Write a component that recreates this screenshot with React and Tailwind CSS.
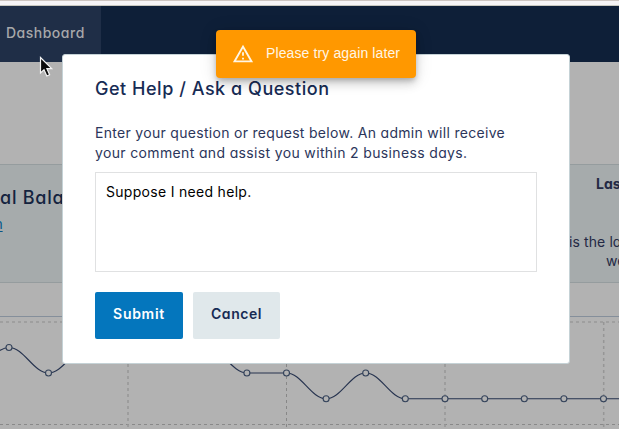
const points = [
  [-31, 373], [9, 347.5], [48.5, 373], [88, 347.5], [128, 347.5], [167, 347.5], [207, 347.5],
  [246.9, 373], [286.5, 373], [326.1, 398.8], [365.7, 373], [405.3, 398.8], [445, 398.8],
  [484.7, 398.8], [524.3, 398.8], [563.9, 398.8], [603.5, 398.8], [643, 398.8],
];

const curve = points
  .map(([x, y], i) => {
    if (i === 0) return `M${x} ${y}`;
    const [px, py] = points[i - 1];
    const h = (x - px) * 0.38;
    return `C${px + h} ${py} ${x - h} ${y} ${x} ${y}`;
  })
  .join(" ");

function Chart() {
  return (
    <svg className="block h-[112px] w-full" viewBox="0 317 619 112" fill="none">
      <path d="M0 322H619" stroke="#999999" strokeWidth="1.6" strokeDasharray="3 3" />
      <path d="M0 424.5H619" stroke="#898989" strokeDasharray="3 3" />
      <path d="M128 322V429M445 322V429M603.7 322V429" stroke="#969696" strokeWidth="1.5" strokeDasharray="3 3" />
      <path d="M286.5 322V429" stroke="#878787" strokeDasharray="3 3" />
      <path d={curve} stroke="#26334f" strokeWidth="1.1" />
      {points.map(([x, y]) => (
        <circle key={x} cx={x} cy={y} r="3" fill="#b2b2b2" stroke="#34435b" strokeWidth="1.1" />
      ))}
    </svg>
  );
}

function Page() {
  return (
    <div className="flex h-full flex-col bg-[#b2b2b2]">
      <div className="h-1.5 shrink-0 border-y border-t-[#cdc5c0] border-b-[#c9c8c0] bg-[#f6f4f6]" />
      <header className="flex h-14 shrink-0 bg-[#0e1f38]">
        <div className="flex w-[101px] items-center bg-[#1f2e47] pb-[3px] pl-1.5 text-[14px] font-medium tracking-[0.5px] text-[#a7a8aa]">
          Dashboard
        </div>
      </header>
      <div className="h-[102px] shrink-0" />
      <section className="flex h-[119px] shrink-0 justify-between border-y border-[#959c9e] bg-[#a6abac]">
        <div className="w-[100px] overflow-hidden whitespace-nowrap pt-[19px]">
          <h2 className="text-[18px] font-medium leading-[27px] tracking-[0.75px] text-[#14233f]">al Balance</h2>
          <p className="-ml-[9px] mt-[3px] text-[14px] leading-5 text-[#04588a] underline underline-offset-2">in</p>
        </div>
        <div className="w-[51px] overflow-hidden whitespace-nowrap text-[14px] leading-5 text-[#242944]">
          <p className="pl-[28px] pt-[9px] font-bold">Last</p>
          <p className="pl-px pt-[38px] leading-[19px] tracking-[0.1px]">is the last</p>
          <p className="pl-[38px] leading-[19px]">week</p>
        </div>
      </section>
      <div className="h-[34px] shrink-0 border-b border-[#858f9b]" />
      <Chart />
    </div>
  );
}

function HelpDialog() {
  return (
    <div role="dialog" className="absolute left-[62px] top-[54px] flex h-[310px] w-[508px] flex-col rounded-[3px] border border-[#c5d2d6] bg-white px-8 pt-5">
      <h1 className="whitespace-nowrap text-[18px] font-medium leading-7 tracking-[0.53px] text-[#172b54]">Get Help / Ask a Question</h1>
      <p className="mt-5 whitespace-nowrap text-[14px] leading-5 text-[#2c365b]">
        <span className="tracking-[0.3px]">Enter your question or request below. An admin will receive</span>
        <br />
        <span className="tracking-[0.35px]">your comment and assist you within 2 business days.</span>
      </p>
      <div className="mt-[9px] h-[100px] w-[442px] border border-[#e0e1e2] px-2.5 py-[9px] text-[14px] leading-5 tracking-[0.3px] text-black">
        Suppose I need help.
      </div>
      <div className="mt-5 flex gap-2.5 text-[14px] font-semibold">
        <button className="h-[47px] w-[88px] rounded-[2px] bg-[#0476bd] pb-1 tracking-[0.7px] text-white">Submit</button>
        <button className="h-[47px] w-[87px] rounded-[2px] bg-[#e0e8eb] pb-1 tracking-[0.55px] text-[#172b54]">Cancel</button>
      </div>
    </div>
  );
}

function Toast() {
  return (
    <div className="absolute left-[216px] top-[30px] flex h-12 w-[200px] items-center rounded-[4px] bg-[#ff9800] pl-4 font-['Liberation_Sans',Arial,sans-serif] text-[14px] text-[#fff6e5] shadow-[0_3px_5px_-1px_rgba(0,0,0,0.2),0_6px_10px_0_rgba(0,0,0,0.14),0_1px_18px_0_rgba(0,0,0,0.12)]">
      <svg className="size-[22px] shrink-0" viewBox="0 0 24 24" fill="currentColor">
        <path d="M12 5.99L19.53 19H4.47L12 5.99M12 2L1 21h22L12 2zm1 14h-2v2h2v-2zm0-6h-2v4h2v-4z" />
      </svg>
      <span className="ml-3 whitespace-nowrap pb-0.5 tracking-[0.12px]">Please try again later</span>
    </div>
  );
}

export default function App() {
  return (
    <div className="relative h-[429px] w-[619px] overflow-hidden font-[Inter,'Open_Sans',sans-serif] [font-feature-settings:'cv11']">
      <Page />
      <HelpDialog />
      <Toast />
      <svg className="absolute left-[39px] top-[56px] h-[22px] w-[15px]" viewBox="0 0 15 22">
        <path d="M1.5 1.5V17L5 13.8L7.8 20L10.6 18.7L7.9 12.7H12.7Z" fill="#0b0b0b" stroke="#f4f4f4" strokeWidth="1.2" />
      </svg>
    </div>
  );
}
